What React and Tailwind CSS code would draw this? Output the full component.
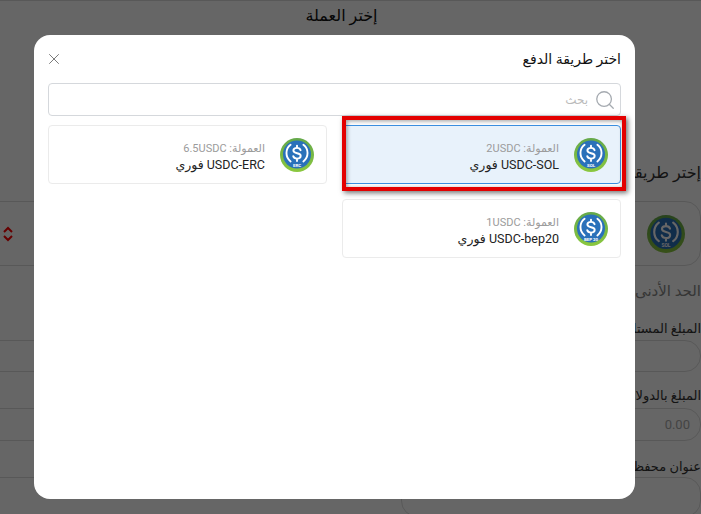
import { Search, X } from "lucide-react";

const FONT = "font-['Roboto','Noto_Sans','DejaVu_Sans',sans-serif]";

// usdc coin with the network name under the dollar sign
const CoinIcon = ({ label, size = 34 }) => {
  const ringId = `ring-${label.replace(" ", "")}-${size}`;
  return (
    <svg width={size} height={size} viewBox="0 0 34 34" className="shrink-0">
      <defs>
        <linearGradient id={ringId} x1="0" y1="0" x2="0" y2="1">
          <stop offset="0" stopColor="#64a84a" />
          <stop offset="1" stopColor="#8bc83f" />
        </linearGradient>
      </defs>
      <circle cx="17" cy="17" r="17" fill={`url(#${ringId})`} />
      <circle cx="17" cy="16.5" r="14" fill="#2a71ba" />
      <path d="M10.6 6.8a10.4 10.4 0 0 0 0 16.6M23.4 6.8a10.4 10.4 0 0 1 0 16.6" fill="none" stroke="#fff" strokeWidth="1.9" strokeLinecap="round" />
      <path d="M20.6 12.2c-.4-1.4-1.8-2.3-3.6-2.3-2 0-3.6 1.1-3.6 2.7 0 3.6 7.3 1.6 7.3 5.2 0 1.7-1.6 2.8-3.7 2.8-1.9 0-3.4-.9-3.8-2.5M17 7.6v2.3M17 20.6v2.4" fill="none" stroke="#fff" strokeWidth="1.9" strokeLinecap="round" />
      <text x="17" y="29" textAnchor="middle" fontSize="4.4" fontWeight="700" fill="#fff" fontFamily="Roboto">{label}</text>
    </svg>
  );
};

const MethodCard = ({ label, fee, name, active }) => (
  <div
    className={`h-[59px] flex items-center gap-[15px] pr-[12px] rounded border ${
      active ? "bg-[#e8f2fb] border-[#3b8fe0]" : "bg-white border-[#ebebeb]"
    }`}
  >
    <CoinIcon label={label} />
    <div className="flex flex-col pt-[4px]">
      <span className="text-[11px] leading-[15px] text-[#9b9b9b]">{fee}</span>
      <span className="text-[12.5px] leading-[17px] text-[#222]">{name}</span>
    </div>
  </div>
);

export default function App() {
  return (
    <div dir="rtl" className={`relative h-[514px] w-[701px] overflow-hidden bg-white ${FONT}`}>
      {/* page behind the modal */}
      <div className="h-[514px] flex flex-col border-t border-[#ddd]">
        <h2 className="text-center text-[16px] leading-[30px] text-[#111] pr-[18px]">إختر العملة</h2>
        <div className="flex justify-between mt-[130px]">
          <div className="w-[300px]">
            <p className="text-[16px] leading-[24px] h-[40px] text-[#333]">إختر طريقة</p>
            <div className="h-[65px] rounded-2xl border border-[#ddd] flex items-center pr-[15px]">
              <CoinIcon label="SOL" size={38} />
            </div>
            <p className="mt-[13px] text-[15px] leading-[24px] text-[#888]">الحد الأدنى</p>
            <p className="mt-[16px] text-[13px] leading-[20px] text-[#333]">المبلغ المستلم</p>
            <div className="h-[32px] mt-[1px] rounded-2xl border border-[#ddd]" />
            <p className="mt-[14px] text-[13px] leading-[20px] text-[#333]">المبلغ بالدولار</p>
            <div className="h-[33px] mt-[2px] rounded-2xl border border-[#ddd] flex items-center pr-[10px] text-[13px] text-[#aaa]">0.00</div>
            <p className="mt-[16px] text-[13px] leading-[20px] text-[#333]">عنوان محفظة</p>
            <div className="h-[40px] rounded-2xl border border-[#ddd]" />
          </div>
          <div className="w-[100px] pt-[40px]">
            <div className="h-[65px] border-y border-[#ddd] flex items-center justify-end pl-[2px]">
              <svg width="12" height="18" viewBox="0 0 12 18" fill="none" stroke="#ff0000" strokeWidth="2">
                <path d="M2 7l4-4 4 4M2 11l4 4 4-4" />
              </svg>
            </div>
            <div className="mt-[74px] h-[32px] border-y border-[#ddd]" />
            <div className="mt-[36px] h-[33px] border-y border-[#ddd]" />
            <div className="mt-[36px] h-[40px] border-t border-[#ddd]" />
          </div>
        </div>
      </div>

      {/* overlay + modal */}
      <div className="absolute inset-0 bg-black/60" />
      <div className="absolute left-[34px] top-[35px] w-[601px] h-[464px] rounded-2xl bg-white px-[14px]">
        <div className="h-[48px] flex items-center justify-between">
          <h3 className="text-[14px] text-[#111]">اختر طريقة الدفع</h3>
          <X size={18} strokeWidth={1.3} className="text-[#777] -ml-[3px]" />
        </div>
        <div className="h-[33px] rounded border border-[#d5d8dc] flex items-center gap-[6px] pr-[4px]">
          <Search size={22} strokeWidth={1.4} className="text-[#a5aab0]" />
          <span className="text-[12px] text-[#bbb]">بحث</span>
        </div>
        <div className="grid grid-cols-2 gap-x-[15px] gap-y-[15px] mt-[9px]">
          <MethodCard active label="SOL" fee="العمولة: 2USDC" name="USDC-SOL فوري" />
          <MethodCard label="ERC" fee="العمولة: 6.5USDC" name="USDC-ERC فوري" />
          <MethodCard label="BEP 20" fee="العمولة: 1USDC" name="USDC-bep20 فوري" />
        </div>
      </div>

      {/* red annotation round the chosen card */}
      <div className="absolute left-[342px] top-[116px] w-[284px] h-[75px] border-4 border-[#e30000] shadow-[2px_2px_5px_rgba(0,0,0,0.55),inset_1px_1px_4px_rgba(0,0,0,0.4)]" />
    </div>
  );
}
